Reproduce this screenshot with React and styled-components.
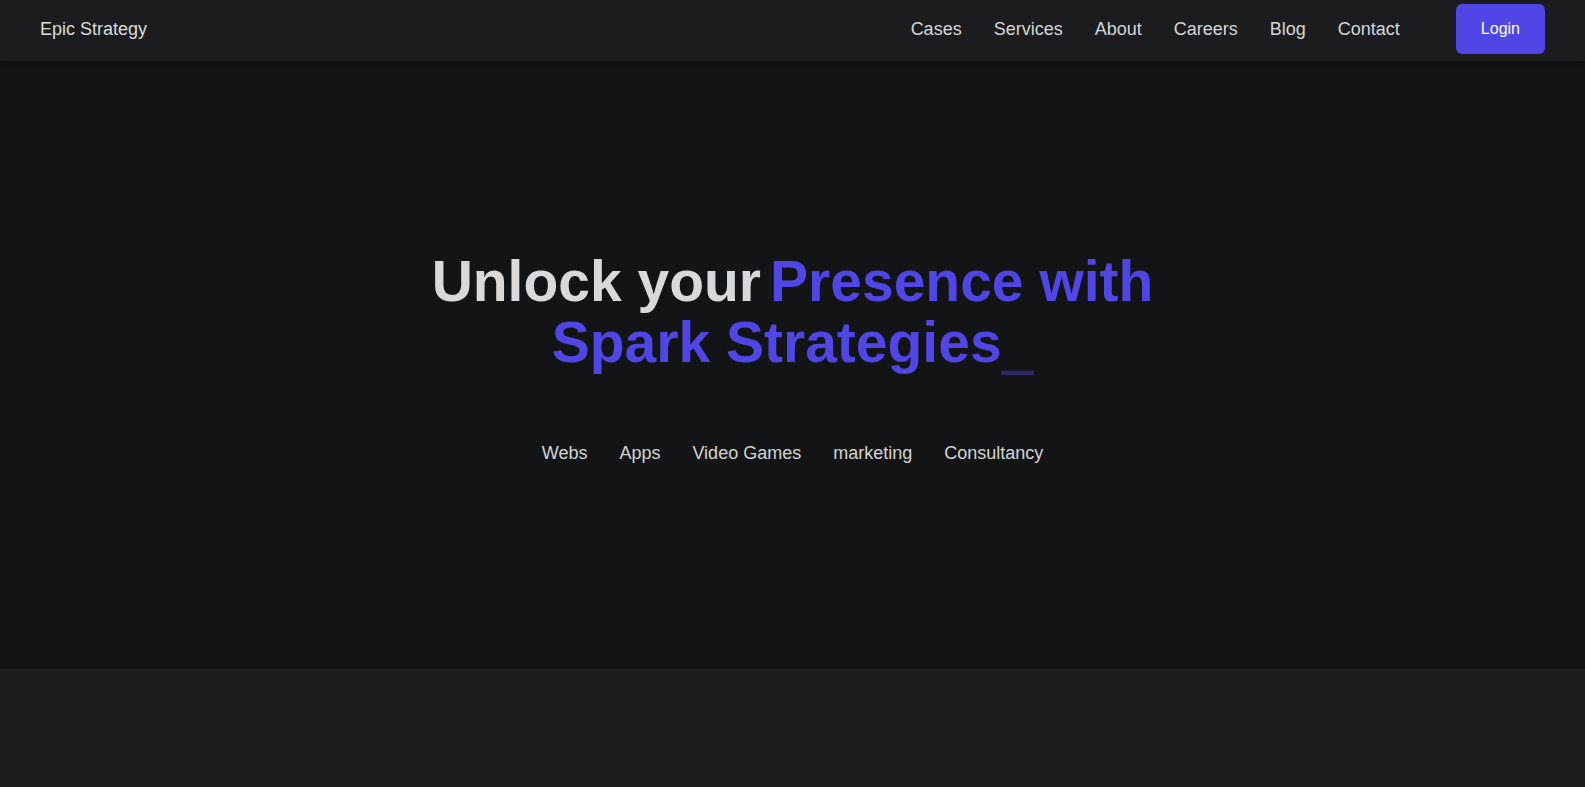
import React from "react";
import styled, { createGlobalStyle } from "styled-components";

const GlobalStyle = createGlobalStyle`
  * {
    box-sizing: border-box;
  }

  body {
    margin: 0;
    background-color: #1c1d1f;
    font-family: "Liberation Sans", Arial, sans-serif;
    color: #d9d9d9;
  }
`;

const Page = styled.div`
  display: flex;
  flex-direction: column;
  min-height: 100vh;
  background-color: #1c1d1f;
`;

const Header = styled.header`
  display: flex;
  align-items: center;
  justify-content: space-between;
  height: 61px;
  padding: 0 40px 3px 40px;
  background-color: #1b1c1e;
  box-shadow: 0 1px 3px rgba(0, 0, 0, 0.35);
  position: relative;
  z-index: 1;
`;

const Logo = styled.a`
  font-size: 18px;
  color: #dcdcdc;
  text-decoration: none;
`;

const Nav = styled.nav`
  display: flex;
  align-items: center;
`;

const NavList = styled.ul`
  display: flex;
  gap: 32px;
  margin: 0 56px 0 0;
  padding: 0;
  list-style: none;
`;

const NavLink = styled.a`
  font-size: 18px;
  color: #d6d6d6;
  text-decoration: none;
`;

const LoginButton = styled.button`
  height: 50px;
  padding: 0 25px;
  border: none;
  border-radius: 6px;
  background-color: #4f46e5;
  color: #ffffff;
  font-family: inherit;
  font-size: 16px;
  cursor: pointer;
`;

const Hero = styled.section`
  display: flex;
  flex-direction: column;
  align-items: center;
  justify-content: center;
  height: 608px;
  padding-bottom: 15px;
  background-color: #131416;
`;

const Title = styled.h1`
  margin: 0;
  max-width: 740px;
  font-size: 57px;
  line-height: 61px;
  font-weight: 700;
  text-align: center;
  color: #d9d9d9;
`;

const Highlight = styled.span`
  margin-left: 9px;
  color: #4f46e5;
`;

const Cursor = styled.span`
  position: relative;
  top: 4px;
  color: ${(props) => props.tint};
  text-shadow: 0 2px 0 ${(props) => props.tint};
`;

const Tags = styled.ul`
  display: flex;
  gap: 32px;
  margin: 70px 0 0 0;
  padding: 0;
  list-style: none;
`;

const Tag = styled.li`
  font-size: 18px;
  color: #d4d4d4;
`;

const Next = styled.section`
  flex: 1;
  background-color: #1c1d1f;
`;

const links = ["Cases", "Services", "About", "Careers", "Blog", "Contact"];
const tags = ["Webs", "Apps", "Video Games", "marketing", "Consultancy"];

function App() {
  return (
    <Page>
      <GlobalStyle />
      <Header>
        <Logo href="#">Epic Strategy</Logo>
        <Nav>
          <NavList>
            {links.map((link) => (
              <li key={link}>
                <NavLink href="#">{link}</NavLink>
              </li>
            ))}
          </NavList>
          <LoginButton>Login</LoginButton>
        </Nav>
      </Header>

      <Hero>
        <Title>
          Unlock your<Highlight>Presence with Spark Strategies</Highlight>
          <Cursor tint="#2d2a68">_</Cursor>
        </Title>
        <Tags>
          {tags.map((tag) => (
            <Tag key={tag}>{tag}</Tag>
          ))}
        </Tags>
      </Hero>

      <Next />
    </Page>
  );
}

export default App;
